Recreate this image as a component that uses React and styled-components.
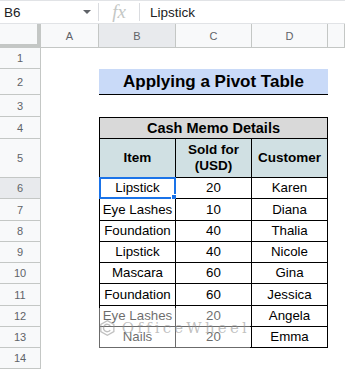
import React from "react";
import styled, { createGlobalStyle } from "styled-components";

const GlobalStyle = createGlobalStyle`
  html, body { margin: 0; padding: 0; background: #fff; }
  body { font-family: "Liberation Sans", Arial, sans-serif; }
  * { box-sizing: border-box; }
`;

const COLS = "41px 58px 77px 76px 76px 1fr";
const LINE = "#c4c7c5";

const Page = styled.div`
  position: relative;
  width: 345px;
  height: 370px;
  overflow: hidden;
  background: #fff;
`;

const FormulaBar = styled.div`
  display: flex;
  align-items: center;
  height: 24px;
  border-top: 1px solid #e1e3e6;
  border-bottom: 1px solid #e1e3e6;
`;

const NameBox = styled.div`
  width: 98px;
  display: flex;
  align-items: center;
  justify-content: space-between;
  padding: 0 7px 0 4px;
  font-size: 13.5px;
  color: #202124;
`;

const Caret = styled.span`
  width: 0;
  height: 0;
  border-left: 4px solid transparent;
  border-right: 4px solid transparent;
  border-top: 4px solid #5f6368;
`;

const Divider = styled.span`
  width: 1px;
  height: 18px;
  background: #dadce0;
`;

const Fx = styled.span`
  width: 40px;
  text-align: center;
  font-family: "Liberation Serif", serif;
  font-style: italic;
  font-size: 19px;
  color: #c4c7c5;
`;

const FormulaText = styled.span`
  padding-left: 10px;
  font-size: 13.5px;
  color: #202124;
`;

const HeaderRow = styled.div`
  display: grid;
  grid-template-columns: ${COLS};
  height: 24px;
  background: #f8f9fa;
`;

const Corner = styled.div`
  border-right: 4px solid ${LINE};
  border-bottom: 4px solid ${LINE};
`;

const ColHeader = styled.div`
  display: flex;
  align-items: center;
  justify-content: center;
  font-size: 11px;
  color: #5f6368;
  background: ${(p) => (p.$active ? "#e8eaed" : "#f8f9fa")};
  border-right: 1px solid ${LINE};
  border-bottom: 1px solid ${LINE};
`;

const SheetRow = styled.div`
  display: grid;
  grid-template-columns: ${COLS};
  height: ${(p) => p.$h}px;
`;

const RowHeader = styled.div`
  display: flex;
  align-items: center;
  justify-content: center;
  font-size: 11px;
  color: #5f6368;
  background: ${(p) => (p.$active ? "#e8eaed" : "#f8f9fa")};
  border-right: 1px solid ${LINE};
  border-bottom: 1px solid ${LINE};
`;

const TitleCell = styled.div`
  grid-column: 3 / 6;
  display: flex;
  align-items: center;
  justify-content: center;
  background: #c9daf8;
  border-bottom: 1px solid #000;
  font-size: 17px;
  font-weight: bold;
  color: #000;
`;

const Cell = styled.div`
  position: relative;
  grid-column: ${(p) => (p.$span ? `span ${p.$span}` : "auto")};
  display: flex;
  align-items: center;
  justify-content: center;
  text-align: center;
  background: ${(p) => p.$bg || "#fff"};
  border-right: 1px solid #000;
  border-bottom: 1px solid #000;
  border-left: ${(p) => (p.$first ? "1px solid #000" : "none")};
  border-top: ${(p) => (p.$top ? "1px solid #000" : "none")};
  font-size: ${(p) => p.$size || 13.3}px;
  font-weight: ${(p) => (p.$bold ? "bold" : "normal")};
  line-height: 16px;
  color: #000;
  white-space: nowrap;
`;

const Selection = styled.span`
  position: absolute;
  inset: -1px;
  border: 2px solid #1a73e8;
  pointer-events: none;
`;

const Handle = styled.span`
  position: absolute;
  right: -4px;
  bottom: -4px;
  width: 7px;
  height: 7px;
  background: #1a73e8;
  border: 1px solid #fff;
`;

const Watermark = styled.div`
  position: absolute;
  left: 94px;
  top: 308px;
  width: 156px;
  height: 40px;
  display: flex;
  align-items: center;
  gap: 7px;
  padding-left: 6px;
  background: rgba(255, 255, 255, 0.42);
  pointer-events: none;
`;

const WatermarkText = styled.span`
  font-family: "DejaVu Serif", "Liberation Serif", serif;
  font-size: 15px;
  letter-spacing: 3.2px;
  color: rgba(140, 140, 140, 0.55);
`;

const rowHeights = [21, 26, 22, 22, 39, 21, 22, 21, 21, 21, 22, 21, 21, 21];

const data = [
  ["Lipstick", "20", "Karen"],
  ["Eye Lashes", "10", "Diana"],
  ["Foundation", "40", "Thalia"],
  ["Lipstick", "40", "Nicole"],
  ["Mascara", "60", "Gina"],
  ["Foundation", "60", "Jessica"],
  ["Eye Lashes", "20", "Angela"],
  ["Nails", "20", "Emma"],
];

function Logo() {
  return (
    <svg width="18" height="20" viewBox="0 0 18 20">
      <path
        d="M9 1 L17 5.5 V14.5 L9 19 L1 14.5 V5.5 Z"
        fill="none"
        stroke="rgba(140,140,140,0.55)"
        strokeWidth="1.6"
      />
      <path
        d="M12.5 7.5 A4.5 4.5 0 1 0 12.5 12.5"
        fill="none"
        stroke="rgba(140,140,140,0.55)"
        strokeWidth="1.8"
      />
    </svg>
  );
}

function renderCells(row) {
  if (row === 2) return [<div key="a" />, <TitleCell key="t">Applying a Pivot Table</TitleCell>];
  if (row === 4)
    return [
      <div key="a" />,
      <Cell key="m" $span={3} $first $top $bg="#d9d9d9" $bold $size={14.5}>
        Cash Memo Details
      </Cell>,
    ];
  if (row === 5)
    return [
      <div key="a" />,
      <Cell key="i" $first $bg="#d0e0e3" $bold $size={13.5}>Item</Cell>,
      <Cell key="s" $bg="#d0e0e3" $bold $size={13.5}>
        Sold for
        <br />
        (USD)
      </Cell>,
      <Cell key="c" $bg="#d0e0e3" $bold $size={13.5}>Customer</Cell>,
    ];
  if (row >= 6 && row <= 13) {
    const [item, sold, customer] = data[row - 6];
    return [
      <div key="a" />,
      <Cell key="i" $first>
        {item}
        {row === 6 && (
          <Selection>
            <Handle />
          </Selection>
        )}
      </Cell>,
      <Cell key="s">{sold}</Cell>,
      <Cell key="c">{customer}</Cell>,
    ];
  }
  return null;
}

export default function App() {
  return (
    <Page>
      <GlobalStyle />
      <FormulaBar>
        <NameBox>
          B6
          <Caret />
        </NameBox>
        <Divider />
        <Fx>fx</Fx>
        <Divider />
        <FormulaText>Lipstick</FormulaText>
      </FormulaBar>
      <HeaderRow>
        <Corner />
        {["A", "B", "C", "D", ""].map((c) => (
          <ColHeader key={c || "E"} $active={c === "B"}>
            {c}
          </ColHeader>
        ))}
      </HeaderRow>
      {rowHeights.map((h, i) => (
        <SheetRow key={i} $h={h}>
          <RowHeader $active={i + 1 === 6}>{i + 1}</RowHeader>
          {renderCells(i + 1)}
        </SheetRow>
      ))}
      <Watermark>
        <Logo />
        <WatermarkText>OfficeWheel</WatermarkText>
      </Watermark>
    </Page>
  );
}
